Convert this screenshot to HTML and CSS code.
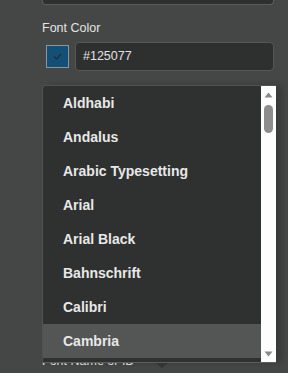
FILE: index.html
```html
<!DOCTYPE html>
<html lang="en">
<head>
  <meta charset="UTF-8" />
  <meta name="viewport" content="width=device-width, initial-scale=1.0"/>
  <title>Font Settings</title>
  <link rel="stylesheet" href="styles.css">
</head>
<body>
  <div class="panel">
    <div class="field-top"></div>

    <label class="field-label">Font Color</label>
    <div class="color-row">
      <span class="swatch">
        <svg width="9" height="7" viewBox="0 0 9 7"><path d="M1 3.5 L3.5 6 L8 1" fill="none" stroke="#2b2f33" stroke-width="1.3"/></svg>
      </span>
      <div class="hex-input">#125077</div>
    </div>

    <div class="font-picker">
      <ul class="font-list">
        <li>Aldhabi</li>
        <li>Andalus</li>
        <li>Arabic Typesetting</li>
        <li>Arial</li>
        <li>Arial Black</li>
        <li>Bahnschrift</li>
        <li>Calibri</li>
        <li class="active">Cambria</li>
      </ul>
      <div class="scrollbar">
        <svg class="arrow" width="9" height="6" viewBox="0 0 9 6"><path d="M4.5 0.5 L8.5 5.5 L0.5 5.5 Z" fill="#8a8a8a"/></svg>
        <div class="thumb"></div>
        <svg class="arrow down" width="9" height="6" viewBox="0 0 9 6"><path d="M0.5 0.5 L8.5 0.5 L4.5 5.5 Z" fill="#8a8a8a"/></svg>
      </div>
      <span class="caret"></span>
    </div>

    <label class="field-label under">Font Name or ID</label>
  </div>
</body>
</html>
```

FILE: styles.css
```css
* {
  box-sizing: border-box;
  margin: 0;
  padding: 0;
}

body {
  font-family: 'Liberation Sans', Arial, sans-serif;
  background: #454646;
  color: #e6e6e6;
  width: 288px;
  height: 373px;
  overflow: hidden;
}

.panel {
  padding-left: 42px;
  width: 276px;
}

.field-top {
  height: 5px;
  width: 232px;
  background: #2e2f2f;
  border: 1px solid #5a5b5b;
  border-top: none;
  border-radius: 0 0 4px 4px;
}

.field-label {
  display: block;
  font-size: 12.5px;
  line-height: 14px;
  margin-top: 16px;
  color: #e4e4e4;
}

.color-row {
  display: flex;
  align-items: center;
  gap: 6px;
  margin-top: 7px;
  width: 232px;
}

.swatch {
  width: 23px;
  height: 23px;
  margin-left: 4px;
  background: #125077;
  border: 1px solid #8e9498;
  display: flex;
  align-items: center;
  justify-content: center;
}

.hex-input {
  flex: 1;
  height: 29px;
  background: #2e2f2f;
  border: 1px solid #555656;
  border-radius: 4px;
  padding-left: 7px;
  font-size: 12.5px;
  line-height: 27px;
  color: #e2e2e2;
}

.font-picker {
  position: relative;
  z-index: 2;
  display: flex;
  width: 234px;
  margin-top: 14px;
  background: #2f3030;
  border-top: 1px solid #505151;
  border-left: 1px solid #505151;
  border-bottom: 1px solid #5c5d5d;
  border-radius: 4px 0 0 0;
  box-shadow: 6px 0 6px rgba(0, 0, 0, 0.18);
}

.font-list {
  list-style: none;
  flex: 1;
  padding-bottom: 4px;
}

.font-list li {
  height: 34px;
  line-height: 34px;
  padding-left: 20px;
  font-size: 14px;
  font-weight: bold;
  color: #e8e8e8;
}

.font-list li.active {
  background: #545555;
}

.scrollbar {
  width: 15px;
  background: #fdfdfd;
  display: flex;
  flex-direction: column;
  align-items: center;
  padding-top: 6px;
}

.thumb {
  width: 9px;
  height: 28px;
  margin-top: 7px;
  border-radius: 5px;
  background: #8d8d8d;
}

.arrow.down {
  margin-top: auto;
  margin-bottom: 5px;
}

.caret {
  position: absolute;
  left: 113px;
  bottom: -6px;
  width: 0;
  height: 0;
  border-left: 6px solid transparent;
  border-right: 6px solid transparent;
  border-top: 5px solid #333434;
}

.field-label.under {
  margin-top: -9px;
  position: relative;
  z-index: 1;
}
```
